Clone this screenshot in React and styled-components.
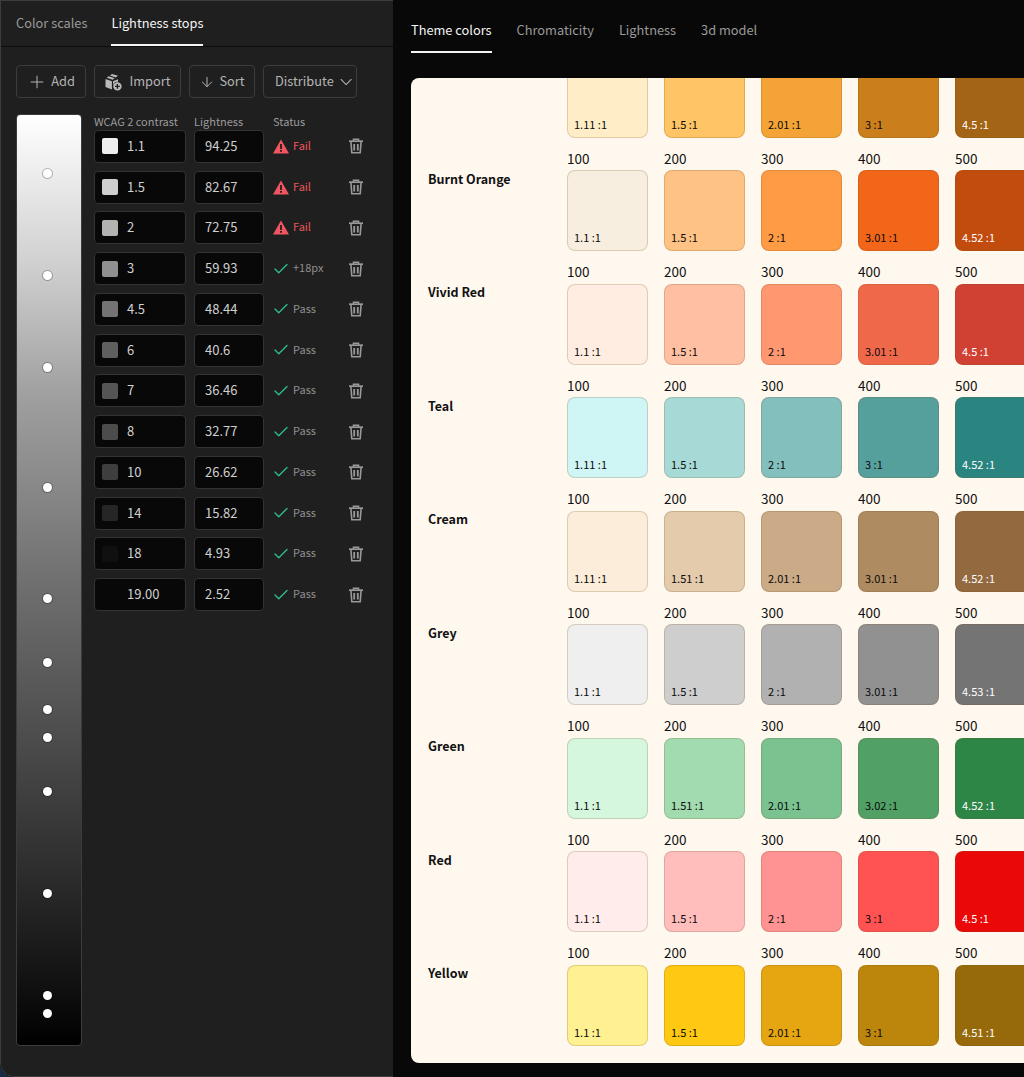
import React from 'react'
import styled, { createGlobalStyle } from 'styled-components'
import { Plus, ArrowDown, ChevronDown, Check } from 'lucide-react'

const stops = [
  { contrast: '1.1', lightness: '94.25', color: '#eeeeee', status: 'Fail', y: 59 },
  { contrast: '1.5', lightness: '82.67', color: '#cfcfcf', status: 'Fail', y: 161 },
  { contrast: '2', lightness: '72.75', color: '#b2b2b2', status: 'Fail', y: 253 },
  { contrast: '3', lightness: '59.93', color: '#909090', status: '+18px', y: 373 },
  { contrast: '4.5', lightness: '48.44', color: '#737373', status: 'Pass', y: 484 },
  { contrast: '6', lightness: '40.6', color: '#5f5f5f', status: 'Pass', y: 548 },
  { contrast: '7', lightness: '36.46', color: '#555555', status: 'Pass', y: 595 },
  { contrast: '8', lightness: '32.77', color: '#4c4c4c', status: 'Pass', y: 623 },
  { contrast: '10', lightness: '26.62', color: '#3e3e3e', status: 'Pass', y: 677 },
  { contrast: '14', lightness: '15.82', color: '#262626', status: 'Pass', y: 779 },
  { contrast: '18', lightness: '4.93', color: '#101010', status: 'Pass', y: 881 },
  { contrast: '19.00', lightness: '2.52', color: '#080808', status: 'Pass', y: 899 },
]

const scales = [
  { name: '', colors: ['#ffedc8', '#ffc465', '#f4a436', '#cb7e1c', '#a46415'], ratios: ['1.11', '1.5', '2.01', '3', '4.5'] },
  { name: 'Burnt Orange', colors: ['#f8eedf', '#ffc285', '#ff9a45', '#f2661a', '#c14c0e'], ratios: ['1.1', '1.5', '2', '3.01', '4.52'] },
  { name: 'Vivid Red', colors: ['#ffede1', '#ffbfa3', '#ff9871', '#f0684a', '#d04133'], ratios: ['1.1', '1.5', '2', '3.01', '4.5'] },
  { name: 'Teal', colors: ['#cff5f5', '#a7dad6', '#83bfbc', '#559f9c', '#2a8480'], ratios: ['1.11', '1.5', '2', '3', '4.52'] },
  { name: 'Cream', colors: ['#fbedd9', '#e3cbab', '#cbab87', '#af8b62', '#936a3f'], ratios: ['1.11', '1.51', '2.01', '3.01', '4.52'] },
  { name: 'Grey', colors: ['#efefef', '#cecece', '#b1b1b1', '#919191', '#747474'], ratios: ['1.1', '1.5', '2', '3.01', '4.53'] },
  { name: 'Green', colors: ['#d4f7dd', '#a1dbaf', '#7ac290', '#51a166', '#2e8646'], ratios: ['1.1', '1.51', '2.01', '3.02', '4.52'] },
  { name: 'Red', colors: ['#ffeceb', '#ffbdbc', '#ff9292', '#ff5252', '#ea0808'], ratios: ['1.1', '1.5', '2', '3', '4.5'] },
  { name: 'Yellow', colors: ['#fff091', '#ffc812', '#e6a612', '#bc860c', '#966a0a'], ratios: ['1.1', '1.5', '2.01', '3', '4.51'] },
]

const steps = ['100', '200', '300', '400', '500']

const GlobalStyle = createGlobalStyle`
  html, body {
    margin: 0;
    height: 100%;
    overflow: hidden;
    background: #1b2a44;
  }
  * {
    box-sizing: border-box;
  }
`

const TrashSvg = styled.svg`
  margin-left: -1px;
`

const TrashIcon = () => (
  <TrashSvg width="16" height="16" viewBox="0 0 16 16" fill="none" stroke="#999999">
    <path d="M1 3.2h14" strokeWidth="1.7" />
    <path d="M5.4 3V1.2h5.2V3" strokeWidth="1.4" />
    <path d="M2.9 3.5l.9 11.3h8.4l.9-11.3" strokeWidth="1.6" />
    <path d="M6.2 6v6.6M9.8 6v6.6" strokeWidth="1.8" />
  </TrashSvg>
)

const WarningIcon = () => (
  <svg width="16" height="15" viewBox="0 0 16 15">
    <path d="M8 .5L16 14.5H0z" fill="#f0565f" />
    <path d="M7.1 5h1.8v5H7.1zM7.1 11h1.8v1.8H7.1z" fill="#1f1f1f" />
  </svg>
)

const ImportIcon = () => (
  <svg width="18" height="18" viewBox="0 0 18 18" fill="#b9b9b9">
    <path d="M8 1l6 1.8-2.4 1.7L6 2.6zM4.6 3.2l6 2-1.9 1.6-6-2zM1.5 6l6.4 2.2v8.3L1.5 14z" />
    <path d="M9 8.2l5-1.9v2.6A4.6 4.6 0 0 0 9 12.5z" />
    <circle cx="13.4" cy="13.4" r="4.2" />
    <path d="M13.4 11v4.8M11 13.4h4.8" stroke="#1f1f1f" strokeWidth="1.4" />
  </svg>
)

const Window = styled.div`
  display: flex;
  height: 1077px;
  width: 1024px;
  overflow: hidden;
  border-bottom-left-radius: 14px;
  background: #080808;
  font-family: 'Noto Sans CJK JP', 'Noto Sans', sans-serif;
`

const LeftPanel = styled.aside`
  flex: 0 0 393px;
  display: flex;
  flex-direction: column;
  background: #1f1f1f;
  border: 1px solid #3c3c3c;
  border-right: none;
  border-bottom-left-radius: 14px;
`

const Tabs = styled.nav`
  display: flex;
  gap: ${p => p.$gap}px;
  height: ${p => p.$height}px;
  padding-left: ${p => p.$left || 0}px;
  border-bottom: ${p => (p.$line ? '1px solid #0c0c0c' : 'none')};
  flex-shrink: 0;
`

const Tab = styled.div`
  height: 100%;
  display: flex;
  align-items: flex-end;
  padding-bottom: 11px;
  font-size: 12.8px;
  line-height: 20px;
  color: ${p => (p.$active ? '#f4f4f4' : '#9a9a9a')};
  border-bottom: 2px solid ${p => (p.$active ? '#f4f4f4' : 'transparent')};
`

const Toolbar = styled.div`
  display: flex;
  gap: 8px;
  padding: 18px 0 0 15px;
`

const ToolButton = styled.button`
  display: flex;
  align-items: center;
  justify-content: ${p => (p.$start ? 'flex-start' : 'center')};
  gap: ${p => p.$gap}px;
  width: ${p => p.$width}px;
  height: 33px;
  padding: 0 0 0 ${p => (p.$start ? 11 : 0)}px;
  background: transparent;
  border: 1px solid #3c3c3c;
  border-radius: 4px;
  color: #b4b4b4;
  font-family: inherit;
  font-size: 12.8px;
  line-height: 20px;
`

const ButtonLabel = styled.span`
  padding-bottom: 2px;
`

const StopsArea = styled.div`
  display: flex;
  gap: 12px;
  padding: 15px 0 0 15px;
  flex: 1;
`

const GradientBar = styled.div`
  position: relative;
  width: 66px;
  height: 932px;
  margin-top: 1px;
  border: 1px solid #3c3c3c;
  border-radius: 4px;
  background: linear-gradient(#ffffff 0%, #d0d0d0 16%, #a0a0a0 30%, #707070 50%, #4a4a4a 68%, #303030 80%, #121212 93%, #000000 100%);
`

const Handle = styled.span`
  position: absolute;
  left: 26px;
  width: 9px;
  height: 9px;
  margin-top: -5.5px;
  border-radius: 50%;
  background: #ffffff;
  box-shadow: 0 0 0 1px rgba(0, 0, 0, 0.25);
`

const StopsTable = styled.div`
  display: flex;
  flex-direction: column;
  gap: 7.75px;
`

const TableRow = styled.div`
  display: grid;
  grid-template-columns: 92px 70px 69px 16px;
  column-gap: 8px;
  align-items: center;
  height: ${p => p.$height}px;
`

const HeadCell = styled.div`
  padding: 0 0 2px ${p => p.$left || 0}px;
  font-size: 11px;
  line-height: 16px;
  color: #9a9a9a;
  white-space: nowrap;
`

const Field = styled.div`
  display: flex;
  align-items: center;
  gap: 9px;
  height: 33px;
  padding-left: ${p => p.$left}px;
  background: #080808;
  border: 1px solid #333333;
  border-radius: 4px;
  font-size: 13px;
  color: #d0d0d0;
`

const FieldText = styled.span`
  padding-bottom: 2px;
`

const Chip = styled.span`
  width: 16px;
  height: 16px;
  border-radius: 2px;
  background: ${p => p.$color};
`

const Status = styled.div`
  display: flex;
  align-items: center;
  gap: 4px;
  padding-left: 1px;
  font-size: 11px;
  color: ${p => (p.$fail ? '#f0565f' : '#8f8f8f')};
  svg {
    flex-shrink: 0;
  }
`

const StatusText = styled.span`
  padding-bottom: 3px;
`

const CheckMark = styled(Check)`
  width: 18px;
  height: 18px;
  margin: 0 -1px;
  color: #2ebd8f;
`

const MainPanel = styled.main`
  flex: 1;
  min-width: 0;
  display: flex;
  flex-direction: column;
  padding-left: 18px;
  overflow: hidden;
`

const Card = styled.section`
  flex: 0 0 985px;
  margin-top: 25px;
  background: #fff8ef;
  border-radius: 8px 0 0 8px;
  overflow: hidden;
`

const ScaleList = styled.div`
  margin-top: -44px;
  display: flex;
  flex-direction: column;
  gap: 10px;
`

const ScaleRow = styled.div`
  display: flex;
  align-items: flex-start;
`

const ScaleName = styled.div`
  flex: 0 0 156px;
  padding: 21px 0 0 17px;
  font-size: 12.5px;
  font-weight: 700;
  line-height: 20px;
  color: #111111;
`

const StepList = styled.div`
  display: flex;
  gap: 16px;
`

const Step = styled.div`
  flex: 0 0 81px;
`

const StepLabel = styled.div`
  height: 22.5px;
  font-size: 13.5px;
  line-height: 20px;
  color: #111111;
`

const Swatch = styled.div`
  display: flex;
  align-items: flex-end;
  width: 81px;
  height: 81px;
  padding: 0 0 5px 6px;
  background: ${p => p.$color};
  border: 1px solid rgba(120, 80, 30, 0.22);
  border-radius: 8px;
  font-size: 11px;
  line-height: 16px;
  color: ${p => (p.$light ? '#ffffff' : '#0a0a0a')};
`

const App = () => {
  return (
    <>
      <GlobalStyle />
      <Window>
        <LeftPanel>
          <Tabs $gap={24} $height={46} $left={15} $line>
            <Tab>Color scales</Tab>
            <Tab $active>Lightness stops</Tab>
          </Tabs>
          <Toolbar>
            <ToolButton $width={70} $gap={4}><Plus size={20} strokeWidth={1.2} /><ButtonLabel>Add</ButtonLabel></ToolButton>
            <ToolButton $width={87} $gap={7}><ImportIcon /><ButtonLabel>Import</ButtonLabel></ToolButton>
            <ToolButton $width={66} $gap={4}><ArrowDown size={16} strokeWidth={1.5} /><ButtonLabel>Sort</ButtonLabel></ToolButton>
            <ToolButton $width={94} $gap={2} $start><ButtonLabel>Distribute</ButtonLabel><ChevronDown size={24} strokeWidth={1.2} /></ToolButton>
          </Toolbar>
          <StopsArea>
            <GradientBar>
              {stops.map(stop => (
                <Handle key={stop.contrast} style={{ top: stop.y }} />
              ))}
            </GradientBar>
            <StopsTable>
              <TableRow $height={9}>
                <HeadCell>WCAG 2 contrast</HeadCell>
                <HeadCell>Lightness</HeadCell>
                <HeadCell $left={1}>Status</HeadCell>
              </TableRow>
              {stops.map(stop => (
                <TableRow key={stop.contrast} $height={33}>
                  <Field $left={7}>
                    <Chip $color={stop.color} />
                    <FieldText>{stop.contrast}</FieldText>
                  </Field>
                  <Field $left={10}><FieldText>{stop.lightness}</FieldText></Field>
                  <Status $fail={stop.status === 'Fail'}>
                    {stop.status === 'Fail' ? <WarningIcon /> : <CheckMark strokeWidth={1.8} />}
                    <StatusText>{stop.status}</StatusText>
                  </Status>
                  <TrashIcon />
                </TableRow>
              ))}
            </StopsTable>
          </StopsArea>
        </LeftPanel>
        <MainPanel>
          <Tabs $gap={25} $height={53}>
            <Tab $active>Theme colors</Tab>
            <Tab>Chromaticity</Tab>
            <Tab>Lightness</Tab>
            <Tab>3d model</Tab>
          </Tabs>
          <Card>
            <ScaleList>
              {scales.map(scale => (
                <ScaleRow key={scale.colors[0]}>
                  <ScaleName>{scale.name}</ScaleName>
                  <StepList>
                    {steps.map((step, i) => (
                      <Step key={step}>
                        {/* the first row is scrolled past its labels */}
                        <StepLabel>{scale.name && step}</StepLabel>
                        <Swatch $color={scale.colors[i]} $light={i === 4}>{scale.ratios[i]} :1</Swatch>
                      </Step>
                    ))}
                  </StepList>
                </ScaleRow>
              ))}
            </ScaleList>
          </Card>
        </MainPanel>
      </Window>
    </>
  )
}

export default App
